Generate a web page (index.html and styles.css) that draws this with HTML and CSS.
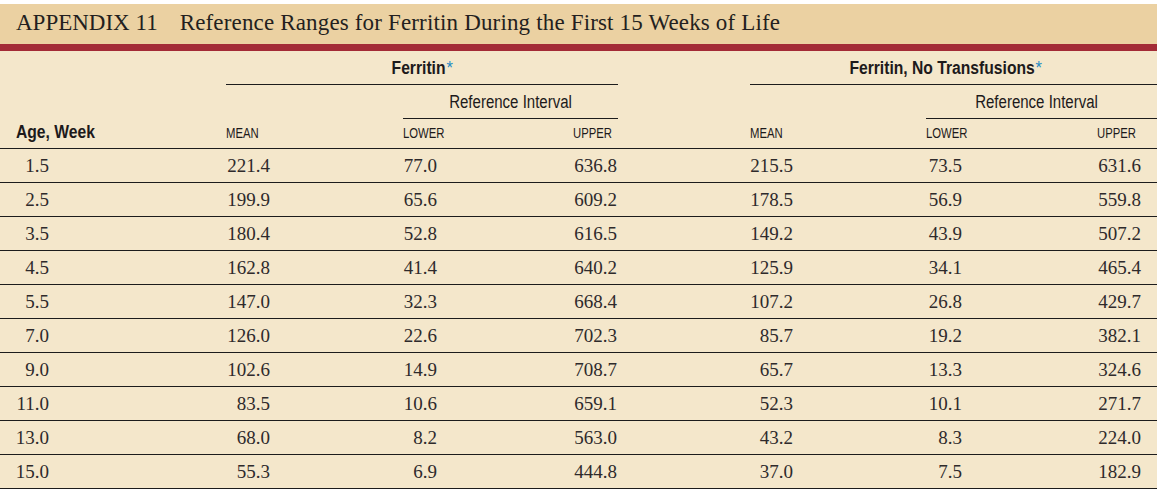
FILE: index.html
```html
<!DOCTYPE html>
<html lang="en">
<head>
<meta charset="utf-8">
<title>Appendix 11</title>
<link rel="stylesheet" href="styles.css">
</head>
<body>
<div class="page">
  <h1 class="title"><span class="label">APPENDIX 11</span><span class="name">Reference Ranges for Ferritin During the First 15 Weeks of Life</span></h1>
  <table class="data">
    <colgroup>
      <col class="c-age"><col class="c-mean"><col class="c-lower"><col class="c-upper">
      <col class="c-gap"><col class="c-mean2"><col class="c-lower2"><col class="c-upper2">
    </colgroup>
    <thead>
      <tr class="h1">
        <th></th>
        <th colspan="3" class="group"><span class="cond mid">Ferritin<span class="ast">*</span></span></th>
        <th></th>
        <th colspan="3" class="group group2"><span class="cond mid">Ferritin, No Transfusions<span class="ast">*</span></span></th>
      </tr>
      <tr class="h2">
        <th></th><th></th>
        <th colspan="2" class="sub"><span class="cond mid">Reference Interval</span></th>
        <th></th><th></th>
        <th colspan="2" class="sub sub2"><span class="cond mid">Reference Interval</span></th>
      </tr>
      <tr class="h3">
        <th class="age-h"><span class="cond">Age, Week</span></th>
        <th class="cap"><span class="cond">MEAN</span></th>
        <th class="cap"><span class="cond">LOWER</span></th>
        <th class="cap"><span class="cond">UPPER</span></th>
        <th></th>
        <th class="cap"><span class="cond">MEAN</span></th>
        <th class="cap"><span class="cond">LOWER</span></th>
        <th class="cap"><span class="cond">UPPER</span></th>
      </tr>
    </thead>
    <tbody>
      <tr><td class="age">1.5</td><td class="mean">221.4</td><td class="lower">77.0</td><td class="upper">636.8</td><td></td><td class="mean2">215.5</td><td class="lower2">73.5</td><td class="upper2">631.6</td></tr>
      <tr><td class="age">2.5</td><td class="mean">199.9</td><td class="lower">65.6</td><td class="upper">609.2</td><td></td><td class="mean2">178.5</td><td class="lower2">56.9</td><td class="upper2">559.8</td></tr>
      <tr><td class="age">3.5</td><td class="mean">180.4</td><td class="lower">52.8</td><td class="upper">616.5</td><td></td><td class="mean2">149.2</td><td class="lower2">43.9</td><td class="upper2">507.2</td></tr>
      <tr><td class="age">4.5</td><td class="mean">162.8</td><td class="lower">41.4</td><td class="upper">640.2</td><td></td><td class="mean2">125.9</td><td class="lower2">34.1</td><td class="upper2">465.4</td></tr>
      <tr><td class="age">5.5</td><td class="mean">147.0</td><td class="lower">32.3</td><td class="upper">668.4</td><td></td><td class="mean2">107.2</td><td class="lower2">26.8</td><td class="upper2">429.7</td></tr>
      <tr><td class="age">7.0</td><td class="mean">126.0</td><td class="lower">22.6</td><td class="upper">702.3</td><td></td><td class="mean2">85.7</td><td class="lower2">19.2</td><td class="upper2">382.1</td></tr>
      <tr><td class="age">9.0</td><td class="mean">102.6</td><td class="lower">14.9</td><td class="upper">708.7</td><td></td><td class="mean2">65.7</td><td class="lower2">13.3</td><td class="upper2">324.6</td></tr>
      <tr><td class="age">11.0</td><td class="mean">83.5</td><td class="lower">10.6</td><td class="upper">659.1</td><td></td><td class="mean2">52.3</td><td class="lower2">10.1</td><td class="upper2">271.7</td></tr>
      <tr><td class="age">13.0</td><td class="mean">68.0</td><td class="lower">8.2</td><td class="upper">563.0</td><td></td><td class="mean2">43.2</td><td class="lower2">8.3</td><td class="upper2">224.0</td></tr>
      <tr><td class="age">15.0</td><td class="mean">55.3</td><td class="lower">6.9</td><td class="upper">444.8</td><td></td><td class="mean2">37.0</td><td class="lower2">7.5</td><td class="upper2">182.9</td></tr>
    </tbody>
  </table>
</div>
</body>
</html>
```

FILE: styles.css
```css
html, body {
  margin: 0;
  padding: 0;
  background: #ffffff;
}

.page {
  width: 1157px;
  margin-top: 4px;
}

.title {
  margin: 0;
  box-sizing: content-box;
  height: 34px;
  padding: 6px 0 0 16px;
  background: #ebd1a2;
  border-bottom: 7px solid #a32b36;
  font-family: "Liberation Serif", "Times New Roman", serif;
  font-weight: normal;
  font-size: 23px;
  line-height: 26px;
  color: #231f20;
  white-space: nowrap;
}

.title .label {
  margin-right: 22px;
}

.title .name {
  letter-spacing: 0.16px;
}

.data {
  width: 1157px;
  table-layout: fixed;
  border-collapse: separate;
  border-spacing: 0;
  background: #f4e7cb;
  color: #231f20;
}

.c-age { width: 226px; }
.c-mean { width: 177px; }
.c-lower { width: 170px; }
.c-upper { width: 45px; }
.c-gap { width: 132px; }
.c-mean2 { width: 176px; }
.c-lower2 { width: 171px; }
.c-upper2 { width: 60px; }

th {
  padding: 0;
  font-family: "Liberation Sans", Arial, sans-serif;
  font-weight: normal;
  text-align: left;
  vertical-align: bottom;
  white-space: nowrap;
  color: #1d1a1b;
}

.cond {
  display: inline-block;
  transform-origin: left bottom;
  transform: scaleX(0.8);
}

.cond.mid {
  transform-origin: center bottom;
}

.h1 { height: 34px; }
.h2 { height: 34px; }
.h3 { height: 30px; }

.group {
  font-weight: bold;
  font-size: 18px;
  line-height: 20px;
  text-align: center;
  padding-bottom: 6px;
  border-bottom: 1px solid #1c1c1c;
}

.group .cond {
  transform: scaleX(0.87);
}

.group2 {
  padding-right: 16px;
}

.ast {
  color: #1f8cc4;
  font-weight: normal;
  font-size: 19px;
  margin-left: 1px;
}

.sub {
  font-size: 18px;
  line-height: 20px;
  text-align: center;
  padding-bottom: 6px;
  border-bottom: 1px solid #1c1c1c;
}

.sub .cond {
  transform: scaleX(0.835);
}

.sub2 {
  padding-right: 10px;
}

.h3 th {
  border-bottom: 1px solid #1c1c1c;
  padding-bottom: 7px;
}

.cap {
  font-size: 14.5px;
  line-height: 16px;
}

.cap .cond {
  transform: scaleX(0.78);
}

.h3 .age-h {
  font-weight: bold;
  font-size: 18px;
  line-height: 20px;
  padding-left: 16px;
  padding-bottom: 6px;
}

.age-h .cond {
  transform: scaleX(0.87);
}

tbody tr {
  height: 34px;
}

td {
  padding: 0;
  font-family: "Liberation Serif", "Times New Roman", serif;
  font-size: 19px;
  line-height: 21px;
  color: #2e2a2b;
  text-align: right;
  vertical-align: middle;
  border-bottom: 1px solid #1c1c1c;
}

.age { padding-right: 177px; }
.mean { padding-right: 133px; }
.lower { padding-right: 136px; }
.upper { padding-right: 1px; }
.mean2 { padding-right: 133px; }
.lower2 { padding-right: 135px; }
.upper2 { padding-right: 16px; }
```
